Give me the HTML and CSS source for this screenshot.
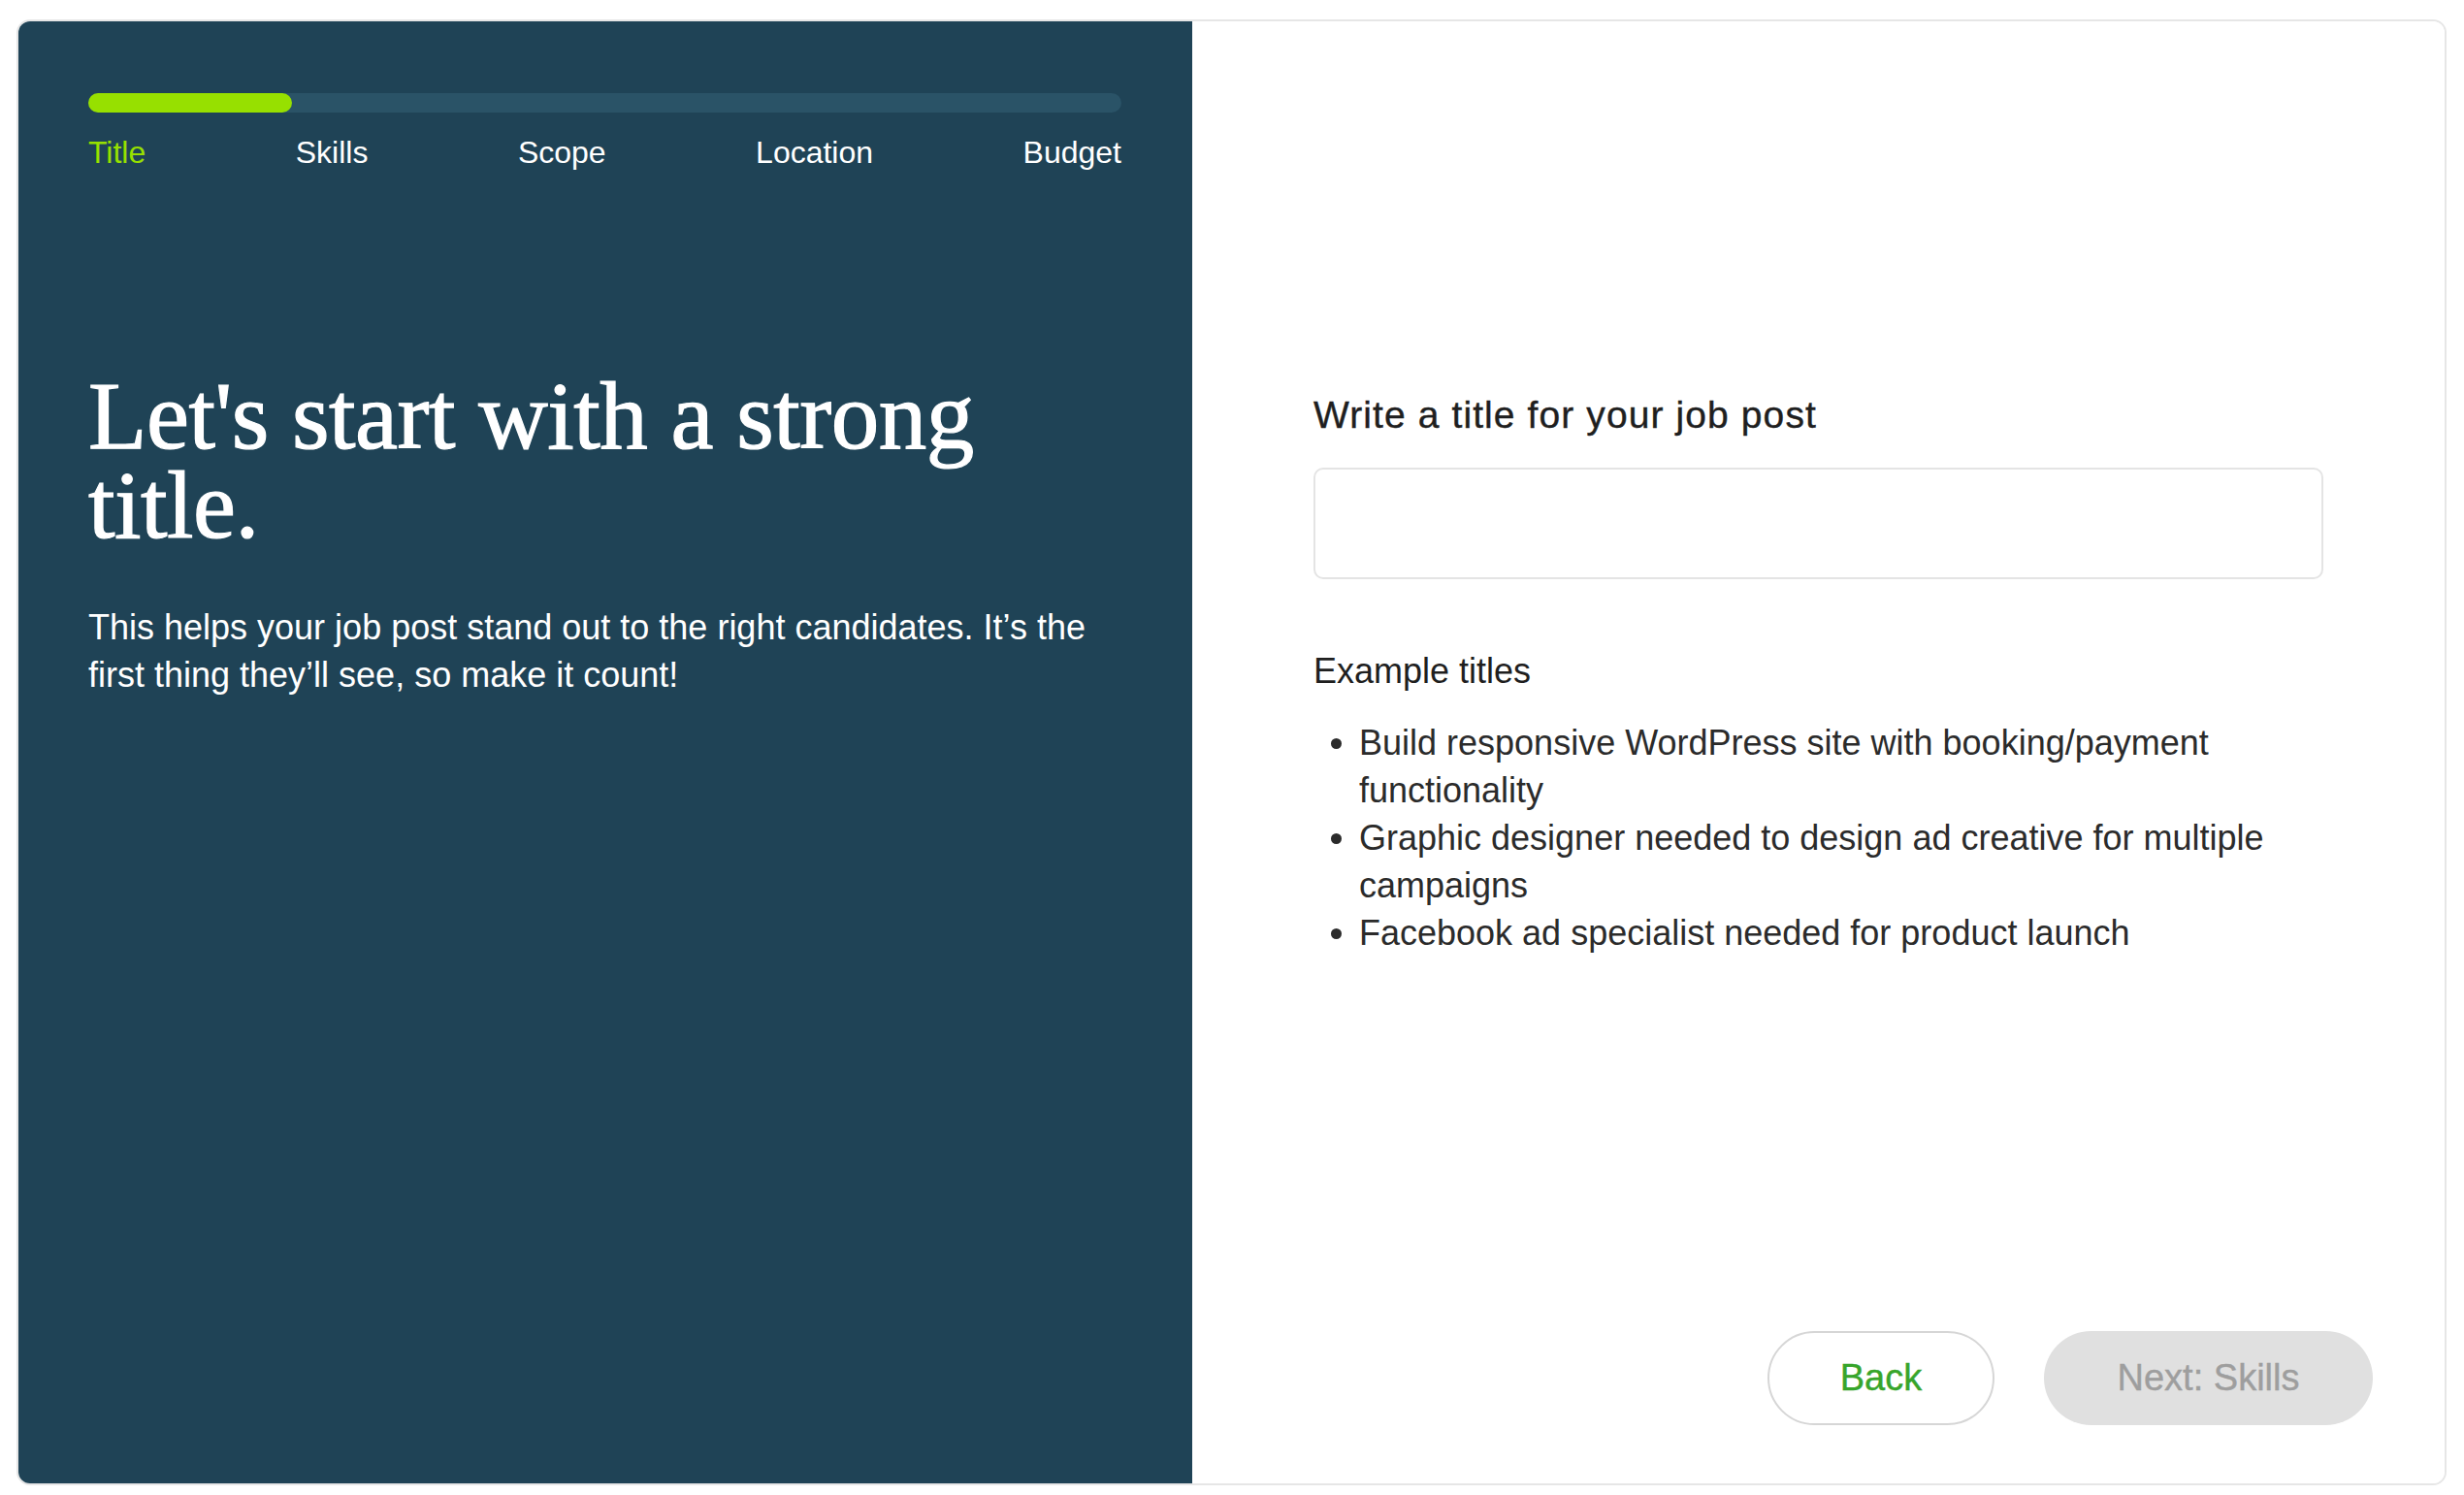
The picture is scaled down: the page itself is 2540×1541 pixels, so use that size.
FILE: index.html
```html
<!DOCTYPE html>
<html lang="en">
<head>
  <meta charset="UTF-8">
  <meta name="viewport" content="width=device-width, initial-scale=1.0">
  <title>Job post - Title</title>
  <link rel="stylesheet" href="styles.css">
</head>
<body>
  <div class="wizard">
    <div class="intro">
      <div class="progress">
        <div class="progress-fill"></div>
      </div>
      <div class="steps">
        <span class="step active">Title</span>
        <span class="step">Skills</span>
        <span class="step">Scope</span>
        <span class="step">Location</span>
        <span class="step">Budget</span>
      </div>
      <h1>Let's start with a strong title.</h1>
      <p class="lead">This helps your job post stand out to the right candidates. It’s the first thing they’ll see, so make it count!</p>
    </div>

    <div class="form-side">
      <div class="form-body">
        <label class="field-label" for="jobTitle">Write a title for your job post</label>
        <input type="text" id="jobTitle" class="title-input">

        <h2 class="examples-head">Example titles</h2>
        <ul class="examples">
          <li>Build responsive WordPress site with booking/payment functionality</li>
          <li>Graphic designer needed to design ad creative for multiple campaigns</li>
          <li>Facebook ad specialist needed for product launch</li>
        </ul>
      </div>

      <div class="actions">
        <button class="btn-back">Back</button>
        <button class="btn-next" disabled>Next: Skills</button>
      </div>
    </div>
  </div>
</body>
</html>
```

FILE: styles.css
```css
body {
  margin: 0;
  padding: 20px 0 0 17px;
  background: #fff;
  font-family: "Liberation Sans", Arial, sans-serif;
}
.wizard {
  box-sizing: border-box;
  width: 2505px;
  height: 1511px;
  display: flex;
  border: 2px solid #e6e6e6;
  border-radius: 14px;
  overflow: hidden;
}

/* left column */
.intro {
  box-sizing: border-box;
  width: 1210px;
  flex-shrink: 0;
  padding: 74px 73px 0 72px;
  background-color: #1f4356;
  color: #fff;
}
.progress {
  height: 20px;
  border-radius: 10px;
  background-color: #2a5367;
}
.progress-fill {
  width: 210px;
  height: 100%;
  border-radius: 10px;
  background-color: #97e000;
}
.steps {
  display: flex;
  justify-content: space-between;
  margin-top: 22px;
  font-size: 32px;
  line-height: 38px;
}
.step.active {
  color: #97e000;
}
h1 {
  margin: 207px 0 0;
  font-family: "Liberation Serif", "Times New Roman", serif;
  font-weight: 400;
  font-size: 99px;
  line-height: 92px;
  letter-spacing: -0.5px;
  -webkit-text-stroke: 1.2px #fff;
}
.lead {
  margin: 55px 0 0;
  font-size: 36px;
  line-height: 49px;
}

/* right column */
.form-side {
  flex: 1;
  display: flex;
  flex-direction: column;
  background: #fff;
  color: #1f1f1f;
}
.form-body {
  padding: 382px 125px 0 125px;
}
.field-label {
  display: block;
  font-size: 39px;
  line-height: 48px;
  letter-spacing: 1.1px;
  -webkit-text-stroke: 0.4px #1f1f1f;
}
.title-input {
  box-sizing: border-box;
  display: block;
  width: 100%;
  height: 115px;
  margin-top: 30px;
  border: 2px solid #e4e4e4;
  border-radius: 10px;
  font-size: 36px;
  padding: 0 24px;
  outline: none;
}
.examples-head {
  margin: 70px 0 0;
  font-size: 36px;
  font-weight: 400;
  line-height: 49px;
}
.examples {
  margin: 25px 0 0;
  padding-left: 47px;
  font-size: 36px;
  line-height: 49px;
  color: #2b2b2b;
}
.actions {
  margin-top: auto;
  display: flex;
  justify-content: flex-end;
  gap: 51px;
  padding: 0 74px 60px 0;
}
.actions button {
  height: 97px;
  border-radius: 49px;
  font-family: "Liberation Sans", Arial, sans-serif;
  font-size: 38px;
  cursor: pointer;
}
.btn-back {
  width: 234px;
  border: 2px solid #d6d6d6;
  background: #fff;
  color: #37a52b;
  -webkit-text-stroke: 0.4px #37a52b;
}
.btn-next {
  width: 339px;
  border: none;
  background-color: #e0e0e0;
  color: #9e9e9e;
  -webkit-text-stroke: 0.4px #9e9e9e;
  cursor: default;
}
```
